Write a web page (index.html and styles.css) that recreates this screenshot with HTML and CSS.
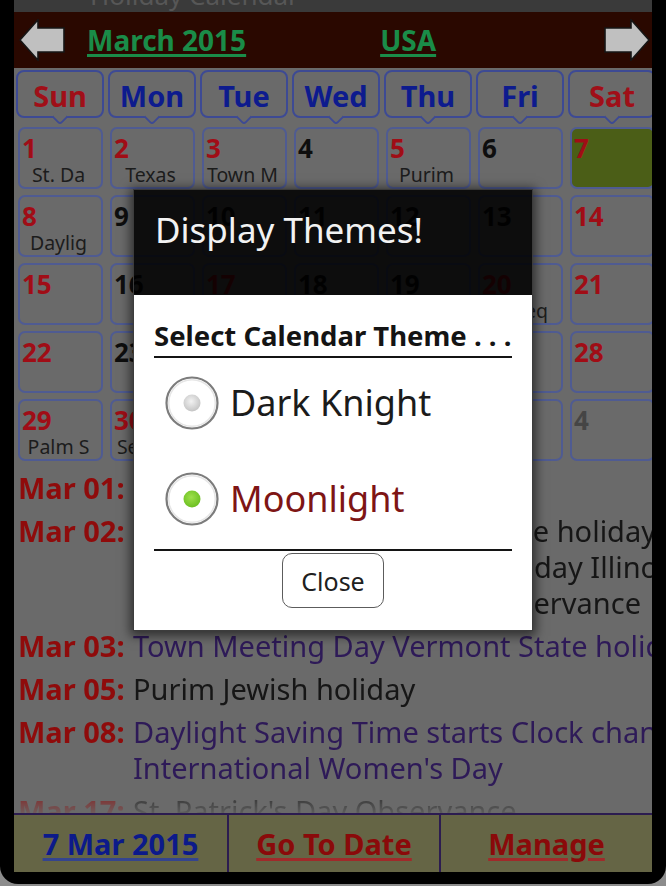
FILE: index.html
```html
<!DOCTYPE html>
<html>
<head>
<meta charset="utf-8">
<link rel="stylesheet" href="styles.css">
</head>
<body>
<div class="device">
  <div class="screen">
    <div class="statusbar"><span>Holiday Calendar</span></div>
    <header class="topbar">
      <svg class="arrow" width="46" height="42" viewBox="0 0 46 42"><path d="M1 21 L19 0.8 L19 9 L45 9 L45 33 L19 33 L19 41.2 Z"/></svg>
      <a class="month">March 2015</a>
      <a class="country">USA</a>
      <svg class="arrow right" width="46" height="42" viewBox="0 0 46 42"><path d="M45 21 L27 0.8 L27 9 L1 9 L1 33 L27 33 L27 41.2 Z"/></svg>
    </header>
    <div class="weekdays">
      <div class="tab red">Sun</div><div class="tab">Mon</div><div class="tab">Tue</div><div class="tab">Wed</div><div class="tab">Thu</div><div class="tab">Fri</div><div class="tab red">Sat</div>
    </div>
    <div class="grid">
      <div class="cell"><div class="num red">1</div><div class="lbl">St. Da</div></div>
      <div class="cell"><div class="num red">2</div><div class="lbl">Texas</div></div>
      <div class="cell"><div class="num red">3</div><div class="lbl">Town M</div></div>
      <div class="cell"><div class="num">4</div></div>
      <div class="cell"><div class="num red">5</div><div class="lbl">Purim</div></div>
      <div class="cell"><div class="num">6</div></div>
      <div class="cell today"><div class="num red">7</div></div>

      <div class="cell"><div class="num red">8</div><div class="lbl">Daylig</div></div>
      <div class="cell"><div class="num">9</div></div>
      <div class="cell"><div class="num">10</div></div>
      <div class="cell"><div class="num">11</div></div>
      <div class="cell"><div class="num">12</div></div>
      <div class="cell"><div class="num">13</div></div>
      <div class="cell"><div class="num red">14</div></div>

      <div class="cell"><div class="num red">15</div></div>
      <div class="cell"><div class="num">16</div></div>
      <div class="cell"><div class="num red">17</div><div class="lbl">St. Pa</div></div>
      <div class="cell"><div class="num">18</div></div>
      <div class="cell"><div class="num">19</div></div>
      <div class="cell"><div class="num red">20</div><div class="lbl">Spr eq</div></div>
      <div class="cell"><div class="num red">21</div></div>

      <div class="cell"><div class="num red">22</div></div>
      <div class="cell"><div class="num">23</div></div>
      <div class="cell"><div class="num">24</div></div>
      <div class="cell"><div class="num">25</div></div>
      <div class="cell"><div class="num">26</div></div>
      <div class="cell"><div class="num">27</div></div>
      <div class="cell"><div class="num red">28</div></div>

      <div class="cell"><div class="num red">29</div><div class="lbl">Palm S</div></div>
      <div class="cell"><div class="num red">30</div><div class="lbl">Seward</div></div>
      <div class="cell"><div class="num red">31</div><div class="lbl">César</div></div>
      <div class="cell"><div class="num grey">1</div></div>
      <div class="cell"><div class="num grey">2</div></div>
      <div class="cell"><div class="num grey">3</div></div>
      <div class="cell"><div class="num grey">4</div></div>
    </div>
    <div class="events">
      <div class="event"><div class="date">Mar 01:</div><div class="lines"><div class="purple">St. David's Day</div></div></div>
      <div class="event"><div class="date">Mar 02:</div><div class="lines"><div>Texas Independence Day State holiday</div><div>Casimir Pulaski Day State holiday Illinois</div><div>Read across America day Observance</div></div></div>
      <div class="event"><div class="date">Mar 03:</div><div class="lines"><div class="purple">Town Meeting Day Vermont State holiday</div></div></div>
      <div class="event"><div class="date">Mar 05:</div><div class="lines"><div>Purim Jewish holiday</div></div></div>
      <div class="event"><div class="date">Mar 08:</div><div class="lines"><div class="purple">Daylight Saving Time starts Clock changes</div><div class="purple">International Women's Day</div></div></div>
      <div class="event"><div class="date">Mar 17:</div><div class="lines"><div>St. Patrick's Day Observance</div></div></div>
    </div>
    <footer class="footer">
      <a class="blue">7 Mar 2015</a>
      <a>Go To Date</a>
      <a>Manage</a>
    </footer>
  </div>

  <div class="dialog">
    <div class="dlg-title">Display Themes!</div>
    <div class="dlg-body">
      <div class="dlg-head">Select Calendar Theme . . .</div>
      <div class="options">
        <div class="option">
          <svg class="radio" width="54" height="54" viewBox="0 0 54 54">
            <defs>
              <radialGradient id="g1" cx="0.45" cy="0.4" r="0.6"><stop offset="0" stop-color="#f2f2f2"/><stop offset="1" stop-color="#c4c4c4"/></radialGradient>
              <radialGradient id="g2" cx="0.45" cy="0.4" r="0.6"><stop offset="0" stop-color="#9de04a"/><stop offset="1" stop-color="#6cbf22"/></radialGradient>
            </defs>
            <circle cx="27" cy="27" r="25.5" fill="#fff" stroke="#7c7c7c" stroke-width="2.2"/>
            <circle cx="27" cy="27" r="23.3" fill="none" stroke="#e6e6e6" stroke-width="1.5"/>
            <circle cx="27" cy="27" r="8.5" fill="url(#g1)"/>
          </svg>
          <span>Dark Knight</span>
        </div>
        <div class="option sel">
          <svg class="radio" width="54" height="54" viewBox="0 0 54 54">
            <circle cx="27" cy="27" r="25.5" fill="#fff" stroke="#7c7c7c" stroke-width="2.2"/>
            <circle cx="27" cy="27" r="23.3" fill="none" stroke="#e6e6e6" stroke-width="1.5"/>
            <circle cx="27" cy="27" r="8.5" fill="url(#g2)"/>
          </svg>
          <span>Moonlight</span>
        </div>
      </div>
      <div class="sep"></div>
      <button class="close">Close</button>
    </div>
  </div>
</div>
</body>
</html>
```
FILE: styles.css
```css
html { background: #8c8c8c; }
body { margin: 0; font-family: "Noto Sans", "Open Sans", sans-serif; }

.device {
  position: relative;
  width: 638px;
  height: 872px;
  padding: 0 14px 12px;
  background: #000;
  border-radius: 0 0 18px 18px;
}
.screen {
  height: 872px;
  display: flex;
  flex-direction: column;
  background: #6a6a6a;
  overflow: hidden;
}
.statusbar { height: 12px; flex: none; background: #3a3a3a; overflow: hidden; }
.statusbar span {
  display: block;
  margin: -19px 0 0 76px;
  font-size: 26px;
  line-height: 28px;
  color: #575757;
}

.topbar {
  height: 56px;
  flex: none;
  display: flex;
  align-items: center;
  background: #2a0800;
  padding-left: 5px;
}
.arrow { flex: none; }
.arrow path { fill: #c0c0c0; stroke: #161616; stroke-width: 1.6; stroke-linejoin: miter; }
.arrow.right { margin-left: auto; margin-right: 2px; }
.month, .country {
  font-weight: 700;
  font-size: 28px;
  line-height: 34px;
  color: #1a8c48;
  text-decoration: underline;
  text-decoration-thickness: 3px;
  text-underline-offset: 3px;
}
.month { margin-left: 22px; }
.country { margin-left: 134px; }

.weekdays {
  flex: none;
  display: grid;
  grid-template-columns: repeat(7, 88px);
  column-gap: 4px;
  padding: 2px 0 0 2px;
}
.tab {
  position: relative;
  height: 48px;
  box-sizing: border-box;
  border: 2px solid #3d4a94;
  border-radius: 8px;
  padding-top: 7px;
  text-align: center;
  font-weight: 700;
  font-size: 29px;
  line-height: 34px;
  color: #0d1b8e;
}
.tab.red { color: #a00f18; }
.tab::after {
  content: "";
  position: absolute;
  left: 50%;
  bottom: -7px;
  width: 10px;
  height: 10px;
  margin-left: -6px;
  background: #6a6a6a;
  border-right: 2px solid #3d4a94;
  border-bottom: 2px solid #3d4a94;
  border-radius: 0 0 4px 0;
  transform: rotate(45deg);
}

.grid {
  flex: none;
  display: grid;
  grid-template-columns: repeat(7, 85px);
  grid-auto-rows: 62px;
  column-gap: 7px;
  row-gap: 6px;
  padding: 9px 0 0 4px;
}
.cell {
  box-sizing: border-box;
  border: 2px solid #4f5b92;
  border-radius: 7px;
  padding: 5px 0 0 2px;
  overflow: hidden;
}
.cell.today { background: #4b5e17; }
.num {
  font-weight: 700;
  font-size: 26px;
  line-height: 28px;
  color: #0e0e0e;
}
.num.red { color: #a00d16; }
.num.grey { color: #454545; }
.lbl {
  margin-top: 2px;
  padding-right: 6px;
  font-size: 19.5px;
  line-height: 22px;
  color: #1c1c1c;
  text-align: center;
  white-space: nowrap;
}

.events {
  flex: 1;
  min-height: 0;
  padding: 9px 0 0 4px;
  overflow: hidden;
  -webkit-mask-image: linear-gradient(to bottom, #000 calc(100% - 30px), rgba(0,0,0,0.15));
  mask-image: linear-gradient(to bottom, #000 calc(100% - 30px), rgba(0,0,0,0.15));
}
.event {
  display: flex;
  margin-bottom: 7px;
  font-size: 29px;
  line-height: 36px;
  color: #161616;
}
.date { width: 115px; flex: none; font-weight: 700; color: #8f0b0b; }
.lines { white-space: nowrap; }
.purple { color: #2e1a58; }

.footer {
  height: 59px;
  flex: none;
  box-sizing: border-box;
  display: grid;
  grid-template-columns: 213px 212px 213px;
  background: #656545;
  border-top: 2px solid #2c1c50;
}
.footer a {
  display: flex;
  align-items: center;
  justify-content: center;
  font-weight: 700;
  font-size: 29px;
  color: #8a0a0a;
  text-decoration: underline;
  text-decoration-thickness: 3px;
  text-underline-offset: 3px;
  text-decoration-color: #a02a2a;
}
.footer a + a { border-left: 2px solid #2c1c50; }
.footer a.blue { color: #0c1a8a; text-decoration-color: #34448e; }

.dialog {
  position: absolute;
  left: 134px;
  top: 190px;
  width: 398px;
  box-shadow: 0 0 0 1px #3c3c3c, 0 2px 10px 4px rgba(0,0,0,0.55);
}
.dlg-title {
  height: 105px;
  box-sizing: border-box;
  background: rgba(0,0,0,0.88);
  color: #f2f2f2;
  font-size: 35px;
  line-height: 44px;
  padding: 18px 0 0 21px;
}
.dlg-body {
  background: #fff;
  padding: 26px 20px 22px;
}
.dlg-head {
  font-weight: 700;
  font-size: 27.5px;
  line-height: 30px;
  padding-bottom: 5px;
  border-bottom: 2.5px solid #141414;
  color: #141414;
  white-space: nowrap;
}
.options {
  display: flex;
  flex-direction: column;
  gap: 32px;
  padding-top: 13px;
}
.option {
  display: flex;
  align-items: center;
  height: 64px;
  font-size: 36px;
  line-height: 44px;
  color: #1b1b1b;
}
.option.sel { color: #7e1515; }
.radio { flex: none; margin: 0 11px 0 11px; }
.sep { margin-top: 18px; border-top: 2px solid #141414; }
.close {
  display: block;
  margin: 2px auto 0;
  width: 102px;
  height: 55px;
  border: 1.5px solid #5c5c5c;
  border-radius: 10px;
  background: #fff;
  font-family: "Noto Sans", "Open Sans", sans-serif;
  font-size: 25px;
  color: #202020;
  padding: 0;
}
```
